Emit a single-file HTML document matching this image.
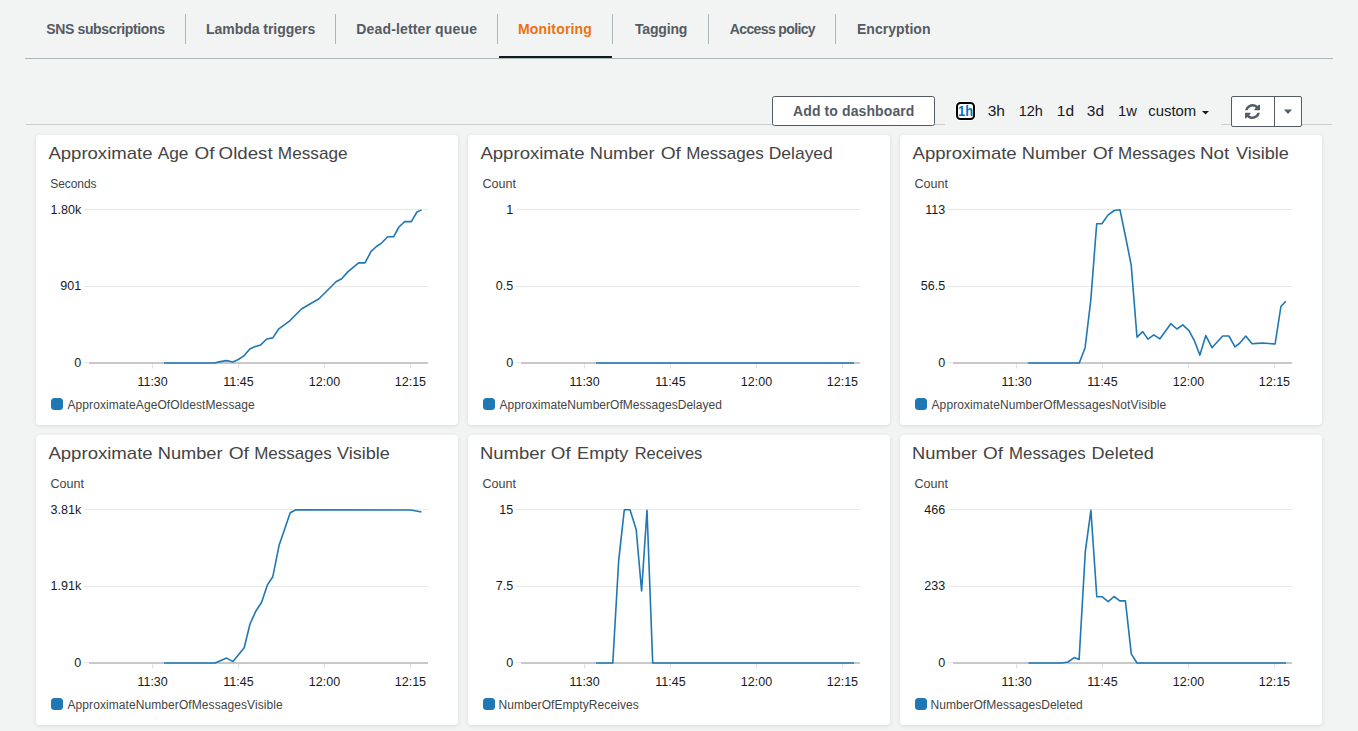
<!DOCTYPE html><html><head><meta charset="utf-8"><style>
html,body{margin:0;padding:0;width:1358px;height:731px;overflow:hidden;background:#f2f3f3;}
.card{position:absolute;background:#fff;border-radius:4px;box-shadow:0 1px 4px rgba(0,0,0,0.10);width:422px;height:290px}
svg{position:absolute;left:0;top:0}
body,svg,text{font-family:"Liberation Sans",sans-serif}
</style></head><body>
<div class="card" style="left:36px;top:135px"></div>
<div class="card" style="left:468px;top:135px"></div>
<div class="card" style="left:900px;top:135px"></div>
<div class="card" style="left:36px;top:435px"></div>
<div class="card" style="left:468px;top:435px"></div>
<div class="card" style="left:900px;top:435px"></div>
<svg width="1358" height="731" viewBox="0 0 1358 731" font-family="Liberation Sans, sans-serif">
<line x1="185.5" y1="14" x2="185.5" y2="44" stroke="#aab7b8" stroke-width="1"/>
<line x1="335.5" y1="14" x2="335.5" y2="44" stroke="#aab7b8" stroke-width="1"/>
<line x1="497.5" y1="14" x2="497.5" y2="44" stroke="#aab7b8" stroke-width="1"/>
<line x1="612.5" y1="14" x2="612.5" y2="44" stroke="#aab7b8" stroke-width="1"/>
<line x1="708.5" y1="14" x2="708.5" y2="44" stroke="#aab7b8" stroke-width="1"/>
<line x1="835.5" y1="14" x2="835.5" y2="44" stroke="#aab7b8" stroke-width="1"/>
<line x1="25" y1="58.5" x2="1333" y2="58.5" stroke="#aab7b8" stroke-width="1"/>
<rect x="499" y="56" width="113" height="2" fill="#16191f"/>
<line x1="26" y1="124.5" x2="945" y2="124.5" stroke="#cccccc" stroke-width="1"/>
<line x1="1221" y1="124.5" x2="1332" y2="124.5" stroke="#cccccc" stroke-width="1"/>
<rect x="772.5" y="96.5" width="162" height="29" rx="2" fill="#fff" stroke="#545b64" stroke-width="1"/>
<rect x="957" y="103" width="17" height="16" rx="3.5" fill="#fff" stroke="#fff" stroke-width="4"/>
<rect x="957" y="103" width="17" height="16" rx="3.5" fill="#fff" stroke="#000" stroke-width="2"/>
<path d="M1202 111 L1209 111 L1205.5 114.5 Z" fill="#16191f"/>
<rect x="1231.5" y="96.5" width="70" height="30" rx="1.5" fill="#fff" stroke="#545b64" stroke-width="1"/>
<line x1="1274.5" y1="97" x2="1274.5" y2="126" stroke="#545b64" stroke-width="1"/>
<path d="M1284 109.5 L1292 109.5 L1288 114 Z" fill="#545b64"/>
<path transform="translate(1245 104) scale(0.009766)" fill="#545b64" d="M1511 928q0 5-1 7-64 268-268 434.5t-478 166.5q-146 0-282.5-55t-243.5-157l-129 129q-19 19-45 19t-45-19-19-45v-448q0-26 19-45t45-19h448q26 0 45 19t19 45-19 45l-137 137q71 66 161 102t187 36q134 0 250-65t186-179q11-17 53-117 8-23 30-23h192q13 0 22.5 9.5t9.5 22.5zm25-800v448q0 26-19 45t-45 19h-448q-26 0-45-19t-19-45 19-45l138-138q-148-137-349-137-134 0-250 65t-186 179q-11 17-53 117-8 23-30 23h-199q-13 0-22.5-9.5t-9.5-22.5v-7q65-268 270-434.5t480-166.5q146 0 284 55.5t245 156.5l130-129q19-19 45-19t45 19 19 45z"/>
<line x1="84" y1="209.5" x2="428" y2="209.5" stroke="#e8e8e8" stroke-width="1"/>
<line x1="84" y1="286.5" x2="428" y2="286.5" stroke="#e8e8e8" stroke-width="1"/>
<line x1="84" y1="362.5" x2="89" y2="362.5" stroke="#e8e8e8" stroke-width="1"/>
<line x1="89" y1="363" x2="428" y2="363" stroke="#c8c8c8" stroke-width="2"/>
<text x="81.3" y="214" font-size="12" fill="#16191f" text-anchor="end" textLength="30.68" lengthAdjust="spacingAndGlyphs">1.80k</text>
<text x="81.3" y="290" font-size="12" fill="#16191f" text-anchor="end" textLength="20.93" lengthAdjust="spacingAndGlyphs">901</text>
<text x="81.3" y="367" font-size="12" fill="#16191f" text-anchor="end" textLength="6.99" lengthAdjust="spacingAndGlyphs">0</text>
<line x1="152.6" y1="364" x2="152.6" y2="368.5" stroke="#e0e0e0" stroke-width="1"/>
<text x="152.6" y="386" font-size="12" fill="#16191f" text-anchor="middle" textLength="30.31" lengthAdjust="spacingAndGlyphs">11:30</text>
<line x1="238.5" y1="364" x2="238.5" y2="368.5" stroke="#e0e0e0" stroke-width="1"/>
<text x="238.5" y="386" font-size="12" fill="#16191f" text-anchor="middle" textLength="30.31" lengthAdjust="spacingAndGlyphs">11:45</text>
<line x1="324.5" y1="364" x2="324.5" y2="368.5" stroke="#e0e0e0" stroke-width="1"/>
<text x="324.5" y="386" font-size="12" fill="#16191f" text-anchor="middle" textLength="31.23" lengthAdjust="spacingAndGlyphs">12:00</text>
<line x1="410.4" y1="364" x2="410.4" y2="368.5" stroke="#e0e0e0" stroke-width="1"/>
<text x="410.4" y="386" font-size="12" fill="#16191f" text-anchor="middle" textLength="31.23" lengthAdjust="spacingAndGlyphs">12:15</text>
<polyline points="164.0,363.0 214.2,363.0 220.5,361.6 226.8,360.6 232.8,362.0 238.3,359.5 243.8,355.9 249.8,348.9 255.3,346.5 260.7,344.9 266.8,339.0 272.8,337.9 278.8,328.8 284.3,324.8 289.7,320.9 295.7,314.8 301.8,308.8 307.5,305.5 313.0,302.3 318.7,299.0 324.5,293.2 330.3,287.5 336.0,281.8 341.7,278.7 348.3,271.4 353.5,267.2 358.6,262.9 365.0,262.9 370.9,251.7 376.4,246.5 381.8,242.8 387.7,236.7 393.7,236.7 398.9,227.0 404.7,221.6 411.3,221.6 417.0,212.0 421.5,209.9" fill="none" stroke="#1f77b4" stroke-width="1.6" stroke-linejoin="round"/>
<rect x="51" y="398" width="12" height="12" rx="3.5" fill="#1f77b4"/>
<line x1="516" y1="209.5" x2="860" y2="209.5" stroke="#e8e8e8" stroke-width="1"/>
<line x1="516" y1="286.5" x2="860" y2="286.5" stroke="#e8e8e8" stroke-width="1"/>
<line x1="516" y1="362.5" x2="521" y2="362.5" stroke="#e8e8e8" stroke-width="1"/>
<line x1="521" y1="363" x2="860" y2="363" stroke="#c8c8c8" stroke-width="2"/>
<text x="513.3" y="214" font-size="12" fill="#16191f" text-anchor="end" textLength="6.99" lengthAdjust="spacingAndGlyphs">1</text>
<text x="513.3" y="290" font-size="12" fill="#16191f" text-anchor="end" textLength="17.44" lengthAdjust="spacingAndGlyphs">0.5</text>
<text x="513.3" y="367" font-size="12" fill="#16191f" text-anchor="end" textLength="6.99" lengthAdjust="spacingAndGlyphs">0</text>
<line x1="584.6" y1="364" x2="584.6" y2="368.5" stroke="#e0e0e0" stroke-width="1"/>
<text x="584.6" y="386" font-size="12" fill="#16191f" text-anchor="middle" textLength="30.31" lengthAdjust="spacingAndGlyphs">11:30</text>
<line x1="670.5" y1="364" x2="670.5" y2="368.5" stroke="#e0e0e0" stroke-width="1"/>
<text x="670.5" y="386" font-size="12" fill="#16191f" text-anchor="middle" textLength="30.31" lengthAdjust="spacingAndGlyphs">11:45</text>
<line x1="756.5" y1="364" x2="756.5" y2="368.5" stroke="#e0e0e0" stroke-width="1"/>
<text x="756.5" y="386" font-size="12" fill="#16191f" text-anchor="middle" textLength="31.23" lengthAdjust="spacingAndGlyphs">12:00</text>
<line x1="842.4" y1="364" x2="842.4" y2="368.5" stroke="#e0e0e0" stroke-width="1"/>
<text x="842.4" y="386" font-size="12" fill="#16191f" text-anchor="middle" textLength="31.23" lengthAdjust="spacingAndGlyphs">12:15</text>
<polyline points="596.0,363.0 854.0,363.0" fill="none" stroke="#1f77b4" stroke-width="1.6" stroke-linejoin="round"/>
<rect x="483" y="398" width="12" height="12" rx="3.5" fill="#1f77b4"/>
<line x1="948" y1="209.5" x2="1292" y2="209.5" stroke="#e8e8e8" stroke-width="1"/>
<line x1="948" y1="286.5" x2="1292" y2="286.5" stroke="#e8e8e8" stroke-width="1"/>
<line x1="948" y1="362.5" x2="953" y2="362.5" stroke="#e8e8e8" stroke-width="1"/>
<line x1="953" y1="363" x2="1292" y2="363" stroke="#c8c8c8" stroke-width="2"/>
<text x="945.3" y="214" font-size="12" fill="#16191f" text-anchor="end" textLength="20.00" lengthAdjust="spacingAndGlyphs">113</text>
<text x="945.3" y="290" font-size="12" fill="#16191f" text-anchor="end" textLength="24.41" lengthAdjust="spacingAndGlyphs">56.5</text>
<text x="945.3" y="367" font-size="12" fill="#16191f" text-anchor="end" textLength="6.99" lengthAdjust="spacingAndGlyphs">0</text>
<line x1="1016.6" y1="364" x2="1016.6" y2="368.5" stroke="#e0e0e0" stroke-width="1"/>
<text x="1016.6" y="386" font-size="12" fill="#16191f" text-anchor="middle" textLength="30.31" lengthAdjust="spacingAndGlyphs">11:30</text>
<line x1="1102.5" y1="364" x2="1102.5" y2="368.5" stroke="#e0e0e0" stroke-width="1"/>
<text x="1102.5" y="386" font-size="12" fill="#16191f" text-anchor="middle" textLength="30.31" lengthAdjust="spacingAndGlyphs">11:45</text>
<line x1="1188.5" y1="364" x2="1188.5" y2="368.5" stroke="#e0e0e0" stroke-width="1"/>
<text x="1188.5" y="386" font-size="12" fill="#16191f" text-anchor="middle" textLength="31.23" lengthAdjust="spacingAndGlyphs">12:00</text>
<line x1="1274.4" y1="364" x2="1274.4" y2="368.5" stroke="#e0e0e0" stroke-width="1"/>
<text x="1274.4" y="386" font-size="12" fill="#16191f" text-anchor="middle" textLength="31.23" lengthAdjust="spacingAndGlyphs">12:15</text>
<polyline points="1028.1,363.0 1079.3,363.0 1085.1,347.7 1090.8,300.0 1096.7,223.7 1101.9,223.7 1107.9,215.1 1114.2,210.5 1120.0,209.8 1125.6,237.0 1131.2,265.1 1137.0,337.2 1142.7,331.7 1148.0,339.1 1153.8,334.8 1159.9,338.8 1165.4,331.2 1170.8,323.7 1176.9,329.0 1182.8,324.9 1189.0,330.7 1194.2,340.3 1199.9,355.1 1205.8,335.6 1212.0,347.7 1217.4,341.8 1222.7,336.0 1228.9,336.0 1235.0,346.8 1239.9,343.0 1245.8,336.0 1252.0,343.8 1257.3,343.4 1262.5,343.0 1268.8,343.5 1275.1,344.0 1280.9,306.5 1285.8,301.2" fill="none" stroke="#1f77b4" stroke-width="1.6" stroke-linejoin="round"/>
<rect x="915" y="398" width="12" height="12" rx="3.5" fill="#1f77b4"/>
<line x1="84" y1="509.5" x2="428" y2="509.5" stroke="#e8e8e8" stroke-width="1"/>
<line x1="84" y1="586.5" x2="428" y2="586.5" stroke="#e8e8e8" stroke-width="1"/>
<line x1="84" y1="662.5" x2="89" y2="662.5" stroke="#e8e8e8" stroke-width="1"/>
<line x1="89" y1="663" x2="428" y2="663" stroke="#c8c8c8" stroke-width="2"/>
<text x="81.3" y="514" font-size="12" fill="#16191f" text-anchor="end" textLength="30.68" lengthAdjust="spacingAndGlyphs">3.81k</text>
<text x="81.3" y="590" font-size="12" fill="#16191f" text-anchor="end" textLength="30.68" lengthAdjust="spacingAndGlyphs">1.91k</text>
<text x="81.3" y="667" font-size="12" fill="#16191f" text-anchor="end" textLength="6.99" lengthAdjust="spacingAndGlyphs">0</text>
<line x1="152.6" y1="664" x2="152.6" y2="668.5" stroke="#e0e0e0" stroke-width="1"/>
<text x="152.6" y="686" font-size="12" fill="#16191f" text-anchor="middle" textLength="30.31" lengthAdjust="spacingAndGlyphs">11:30</text>
<line x1="238.5" y1="664" x2="238.5" y2="668.5" stroke="#e0e0e0" stroke-width="1"/>
<text x="238.5" y="686" font-size="12" fill="#16191f" text-anchor="middle" textLength="30.31" lengthAdjust="spacingAndGlyphs">11:45</text>
<line x1="324.5" y1="664" x2="324.5" y2="668.5" stroke="#e0e0e0" stroke-width="1"/>
<text x="324.5" y="686" font-size="12" fill="#16191f" text-anchor="middle" textLength="31.23" lengthAdjust="spacingAndGlyphs">12:00</text>
<line x1="410.4" y1="664" x2="410.4" y2="668.5" stroke="#e0e0e0" stroke-width="1"/>
<text x="410.4" y="686" font-size="12" fill="#16191f" text-anchor="middle" textLength="31.23" lengthAdjust="spacingAndGlyphs">12:15</text>
<polyline points="164.0,663.0 215.1,663.0 226.7,658.1 233.0,661.6 244.2,647.7 250.0,624.0 255.8,611.2 261.6,602.3 267.4,584.9 272.8,576.7 279.1,545.3 284.7,529.0 290.2,512.8 296.0,509.8 411.0,510.0 421.5,512.0" fill="none" stroke="#1f77b4" stroke-width="1.6" stroke-linejoin="round"/>
<rect x="51" y="698" width="12" height="12" rx="3.5" fill="#1f77b4"/>
<line x1="516" y1="509.5" x2="860" y2="509.5" stroke="#e8e8e8" stroke-width="1"/>
<line x1="516" y1="586.5" x2="860" y2="586.5" stroke="#e8e8e8" stroke-width="1"/>
<line x1="516" y1="662.5" x2="521" y2="662.5" stroke="#e8e8e8" stroke-width="1"/>
<line x1="521" y1="663" x2="860" y2="663" stroke="#c8c8c8" stroke-width="2"/>
<text x="513.3" y="514" font-size="12" fill="#16191f" text-anchor="end" textLength="13.96" lengthAdjust="spacingAndGlyphs">15</text>
<text x="513.3" y="590" font-size="12" fill="#16191f" text-anchor="end" textLength="17.44" lengthAdjust="spacingAndGlyphs">7.5</text>
<text x="513.3" y="667" font-size="12" fill="#16191f" text-anchor="end" textLength="6.99" lengthAdjust="spacingAndGlyphs">0</text>
<line x1="584.6" y1="664" x2="584.6" y2="668.5" stroke="#e0e0e0" stroke-width="1"/>
<text x="584.6" y="686" font-size="12" fill="#16191f" text-anchor="middle" textLength="30.31" lengthAdjust="spacingAndGlyphs">11:30</text>
<line x1="670.5" y1="664" x2="670.5" y2="668.5" stroke="#e0e0e0" stroke-width="1"/>
<text x="670.5" y="686" font-size="12" fill="#16191f" text-anchor="middle" textLength="30.31" lengthAdjust="spacingAndGlyphs">11:45</text>
<line x1="756.5" y1="664" x2="756.5" y2="668.5" stroke="#e0e0e0" stroke-width="1"/>
<text x="756.5" y="686" font-size="12" fill="#16191f" text-anchor="middle" textLength="31.23" lengthAdjust="spacingAndGlyphs">12:00</text>
<line x1="842.4" y1="664" x2="842.4" y2="668.5" stroke="#e0e0e0" stroke-width="1"/>
<text x="842.4" y="686" font-size="12" fill="#16191f" text-anchor="middle" textLength="31.23" lengthAdjust="spacingAndGlyphs">12:15</text>
<polyline points="596.0,663.0 612.8,663.0 618.7,560.3 624.3,509.8 630.0,509.8 636.2,529.5 641.6,591.0 647.0,510.3 652.7,663.0 854.0,663.0" fill="none" stroke="#1f77b4" stroke-width="1.6" stroke-linejoin="round"/>
<rect x="483" y="698" width="12" height="12" rx="3.5" fill="#1f77b4"/>
<line x1="948" y1="509.5" x2="1292" y2="509.5" stroke="#e8e8e8" stroke-width="1"/>
<line x1="948" y1="586.5" x2="1292" y2="586.5" stroke="#e8e8e8" stroke-width="1"/>
<line x1="948" y1="662.5" x2="953" y2="662.5" stroke="#e8e8e8" stroke-width="1"/>
<line x1="953" y1="663" x2="1292" y2="663" stroke="#c8c8c8" stroke-width="2"/>
<text x="945.3" y="514" font-size="12" fill="#16191f" text-anchor="end" textLength="20.93" lengthAdjust="spacingAndGlyphs">466</text>
<text x="945.3" y="590" font-size="12" fill="#16191f" text-anchor="end" textLength="20.93" lengthAdjust="spacingAndGlyphs">233</text>
<text x="945.3" y="667" font-size="12" fill="#16191f" text-anchor="end" textLength="6.99" lengthAdjust="spacingAndGlyphs">0</text>
<line x1="1016.6" y1="664" x2="1016.6" y2="668.5" stroke="#e0e0e0" stroke-width="1"/>
<text x="1016.6" y="686" font-size="12" fill="#16191f" text-anchor="middle" textLength="30.31" lengthAdjust="spacingAndGlyphs">11:30</text>
<line x1="1102.5" y1="664" x2="1102.5" y2="668.5" stroke="#e0e0e0" stroke-width="1"/>
<text x="1102.5" y="686" font-size="12" fill="#16191f" text-anchor="middle" textLength="30.31" lengthAdjust="spacingAndGlyphs">11:45</text>
<line x1="1188.5" y1="664" x2="1188.5" y2="668.5" stroke="#e0e0e0" stroke-width="1"/>
<text x="1188.5" y="686" font-size="12" fill="#16191f" text-anchor="middle" textLength="31.23" lengthAdjust="spacingAndGlyphs">12:00</text>
<line x1="1274.4" y1="664" x2="1274.4" y2="668.5" stroke="#e0e0e0" stroke-width="1"/>
<text x="1274.4" y="686" font-size="12" fill="#16191f" text-anchor="middle" textLength="31.23" lengthAdjust="spacingAndGlyphs">12:15</text>
<polyline points="1028.6,663.0 1061.9,663.0 1068.0,662.0 1074.2,657.6 1079.1,659.5 1085.3,551.7 1090.9,510.3 1096.8,596.7 1102.0,596.7 1108.2,601.7 1114.1,596.5 1119.8,600.9 1125.4,600.9 1131.3,653.9 1137.0,663.0 1286.0,663.0" fill="none" stroke="#1f77b4" stroke-width="1.6" stroke-linejoin="round"/>
<rect x="915" y="698" width="12" height="12" rx="3.5" fill="#1f77b4"/>
<text x="46.20" y="34" font-size="14" font-weight="bold" fill="#545b64" textLength="118.77" lengthAdjust="spacing">SNS subscriptions</text>
<text x="206.00" y="34" font-size="14" font-weight="bold" fill="#545b64" textLength="109.20" lengthAdjust="spacing">Lambda triggers</text>
<text x="356.30" y="34" font-size="14" font-weight="bold" fill="#545b64" textLength="120.65" lengthAdjust="spacing">Dead-letter queue</text>
<text x="518.00" y="34" font-size="14" font-weight="bold" fill="#ec7211" textLength="73.91" lengthAdjust="spacing">Monitoring</text>
<text x="635.00" y="34" font-size="14" font-weight="bold" fill="#545b64" textLength="52.41" lengthAdjust="spacing">Tagging</text>
<text x="729.80" y="34" font-size="14" font-weight="bold" fill="#545b64" textLength="85.79" lengthAdjust="spacing">Access policy</text>
<text x="856.90" y="34" font-size="14" font-weight="bold" fill="#545b64" textLength="73.62" lengthAdjust="spacing">Encryption</text>
<text x="793.10" y="116" font-size="14" font-weight="bold" fill="#545b64" textLength="121.28" lengthAdjust="spacing">Add to dashboard</text>
<text x="958.08" y="116" font-size="14" font-weight="bold" fill="#0073bb" textLength="15.04" lengthAdjust="spacingAndGlyphs">1h</text>
<text x="987.69" y="116" font-size="14" font-weight="normal" fill="#16191f" textLength="17.25" lengthAdjust="spacingAndGlyphs">3h</text>
<text x="1018.67" y="116" font-size="14" font-weight="normal" fill="#16191f" textLength="24.10" lengthAdjust="spacingAndGlyphs">12h</text>
<text x="1056.79" y="116" font-size="14" font-weight="normal" fill="#16191f" textLength="17.25" lengthAdjust="spacingAndGlyphs">1d</text>
<text x="1086.89" y="116" font-size="14" font-weight="normal" fill="#16191f" textLength="17.25" lengthAdjust="spacingAndGlyphs">3d</text>
<text x="1117.95" y="116" font-size="14" font-weight="normal" fill="#16191f" textLength="18.85" lengthAdjust="spacingAndGlyphs">1w</text>
<text x="1148.24" y="116" font-size="14" font-weight="normal" fill="#16191f" textLength="47.96" lengthAdjust="spacingAndGlyphs">custom</text>
<text x="48.40" y="158.8" font-size="17" font-weight="normal" fill="#444" textLength="104.08" lengthAdjust="spacingAndGlyphs">Approximate</text>
<text x="157.70" y="158.8" font-size="17" font-weight="normal" fill="#444" textLength="30.75" lengthAdjust="spacingAndGlyphs">Age</text>
<text x="194.49" y="158.8" font-size="17" font-weight="normal" fill="#444" textLength="19.96" lengthAdjust="spacingAndGlyphs">Of</text>
<text x="218.60" y="158.8" font-size="17" font-weight="normal" fill="#444" textLength="54.05" lengthAdjust="spacingAndGlyphs">Oldest</text>
<text x="277.89" y="158.8" font-size="17" font-weight="normal" fill="#444" textLength="69.71" lengthAdjust="spacingAndGlyphs">Message</text>
<text x="50.30" y="188" font-size="12" font-weight="normal" fill="#444" textLength="46.20" lengthAdjust="spacing">Seconds</text>
<text x="67.50" y="408.9" font-size="12" font-weight="normal" fill="#444" textLength="187.17" lengthAdjust="spacing">ApproximateAgeOfOldestMessage</text>
<text x="480.40" y="158.8" font-size="17" font-weight="normal" fill="#444" textLength="104.28" lengthAdjust="spacingAndGlyphs">Approximate</text>
<text x="589.73" y="158.8" font-size="17" font-weight="normal" fill="#444" textLength="64.88" lengthAdjust="spacingAndGlyphs">Number</text>
<text x="660.67" y="158.8" font-size="17" font-weight="normal" fill="#444" textLength="20.28" lengthAdjust="spacingAndGlyphs">Of</text>
<text x="686.20" y="158.8" font-size="17" font-weight="normal" fill="#444" textLength="77.48" lengthAdjust="spacingAndGlyphs">Messages</text>
<text x="768.77" y="158.8" font-size="17" font-weight="normal" fill="#444" textLength="64.01" lengthAdjust="spacingAndGlyphs">Delayed</text>
<text x="482.45" y="188" font-size="12" font-weight="normal" fill="#444" textLength="33.48" lengthAdjust="spacingAndGlyphs">Count</text>
<text x="499.50" y="408.9" font-size="12" font-weight="normal" fill="#444" textLength="222.44" lengthAdjust="spacing">ApproximateNumberOfMessagesDelayed</text>
<text x="912.50" y="158.8" font-size="17" font-weight="normal" fill="#444" textLength="104.18" lengthAdjust="spacingAndGlyphs">Approximate</text>
<text x="1021.73" y="158.8" font-size="17" font-weight="normal" fill="#444" textLength="64.88" lengthAdjust="spacingAndGlyphs">Number</text>
<text x="1092.67" y="158.8" font-size="17" font-weight="normal" fill="#444" textLength="20.28" lengthAdjust="spacingAndGlyphs">Of</text>
<text x="1118.00" y="158.8" font-size="17" font-weight="normal" fill="#444" textLength="77.48" lengthAdjust="spacingAndGlyphs">Messages</text>
<text x="1199.99" y="158.8" font-size="17" font-weight="normal" fill="#444" textLength="29.32" lengthAdjust="spacingAndGlyphs">Not</text>
<text x="1236.00" y="158.8" font-size="17" font-weight="normal" fill="#444" textLength="52.93" lengthAdjust="spacingAndGlyphs">Visible</text>
<text x="914.45" y="188" font-size="12" font-weight="normal" fill="#444" textLength="33.48" lengthAdjust="spacingAndGlyphs">Count</text>
<text x="931.50" y="408.9" font-size="12" font-weight="normal" fill="#444" textLength="234.72" lengthAdjust="spacing">ApproximateNumberOfMessagesNotVisible</text>
<text x="48.40" y="458.8" font-size="17" font-weight="normal" fill="#444" textLength="104.28" lengthAdjust="spacingAndGlyphs">Approximate</text>
<text x="157.73" y="458.8" font-size="17" font-weight="normal" fill="#444" textLength="64.88" lengthAdjust="spacingAndGlyphs">Number</text>
<text x="228.67" y="458.8" font-size="17" font-weight="normal" fill="#444" textLength="20.28" lengthAdjust="spacingAndGlyphs">Of</text>
<text x="254.20" y="458.8" font-size="17" font-weight="normal" fill="#444" textLength="77.48" lengthAdjust="spacingAndGlyphs">Messages</text>
<text x="337.00" y="458.8" font-size="17" font-weight="normal" fill="#444" textLength="52.93" lengthAdjust="spacingAndGlyphs">Visible</text>
<text x="50.45" y="488" font-size="12" font-weight="normal" fill="#444" textLength="33.48" lengthAdjust="spacingAndGlyphs">Count</text>
<text x="67.50" y="708.9" font-size="12" font-weight="normal" fill="#444" textLength="215.15" lengthAdjust="spacing">ApproximateNumberOfMessagesVisible</text>
<text x="480.01" y="458.8" font-size="17" font-weight="normal" fill="#444" textLength="65.70" lengthAdjust="spacingAndGlyphs">Number</text>
<text x="550.89" y="458.8" font-size="17" font-weight="normal" fill="#444" textLength="19.85" lengthAdjust="spacingAndGlyphs">Of</text>
<text x="577.14" y="458.8" font-size="17" font-weight="normal" fill="#444" textLength="51.16" lengthAdjust="spacingAndGlyphs">Empty</text>
<text x="634.73" y="458.8" font-size="17" font-weight="normal" fill="#444" textLength="67.59" lengthAdjust="spacingAndGlyphs">Receives</text>
<text x="482.45" y="488" font-size="12" font-weight="normal" fill="#444" textLength="33.48" lengthAdjust="spacingAndGlyphs">Count</text>
<text x="498.50" y="708.9" font-size="12" font-weight="normal" fill="#444" textLength="140.22" lengthAdjust="spacing">NumberOfEmptyReceives</text>
<text x="912.12" y="458.8" font-size="17" font-weight="normal" fill="#444" textLength="65.08" lengthAdjust="spacingAndGlyphs">Number</text>
<text x="982.99" y="458.8" font-size="17" font-weight="normal" fill="#444" textLength="19.96" lengthAdjust="spacingAndGlyphs">Of</text>
<text x="1009.11" y="458.8" font-size="17" font-weight="normal" fill="#444" textLength="76.57" lengthAdjust="spacingAndGlyphs">Messages</text>
<text x="1091.54" y="458.8" font-size="17" font-weight="normal" fill="#444" textLength="62.41" lengthAdjust="spacingAndGlyphs">Deleted</text>
<text x="914.45" y="488" font-size="12" font-weight="normal" fill="#444" textLength="33.48" lengthAdjust="spacingAndGlyphs">Count</text>
<text x="930.50" y="708.9" font-size="12" font-weight="normal" fill="#444" textLength="152.31" lengthAdjust="spacing">NumberOfMessagesDeleted</text>
</svg></body></html>
